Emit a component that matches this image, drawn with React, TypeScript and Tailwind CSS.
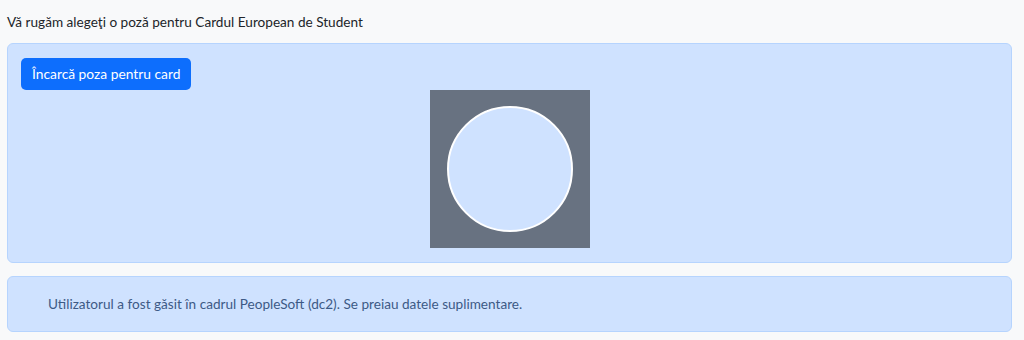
export default function App() {
  return (
    <div className="min-h-[340px] bg-[#f8f9fa] px-[7px] pt-[12px] font-['Lato',sans-serif] text-[13.6px] text-[#212529]">
      <p className="h-[20px] leading-[20px]">Vă rugăm alegeţi o poză pentru Cardul European de Student</p>

      <div className="mt-[11px] h-[220px] w-[1005px] rounded-[6px] border border-[#b6d4fe] bg-[#cfe2ff] px-[13px] pt-[14px]">
        <button className="h-[32px] rounded-[5px] bg-[#0d6efd] px-[11px] text-[13.8px] leading-[32px] text-white">
          Încarcă poza pentru card
        </button>
        <div className="flex justify-center">
          <svg width="160" height="158" viewBox="0 0 160 158">
            <rect x="0" y="0" width="160" height="158" fill="#687281" />
            <circle cx="80" cy="79" r="62" fill="#cfe2ff" stroke="#ffffff" strokeWidth="2" />
          </svg>
        </div>
      </div>

      <div className="mt-[13px] flex h-[56px] w-[1005px] items-center rounded-[6px] border border-[#b6d4fe] bg-[#cfe2ff] pl-[40px] text-[#3d5a86]">
        Utilizatorul a fost găsit în cadrul PeopleSoft (dc2). Se preiau datele suplimentare.
      </div>
    </div>
  );
}
